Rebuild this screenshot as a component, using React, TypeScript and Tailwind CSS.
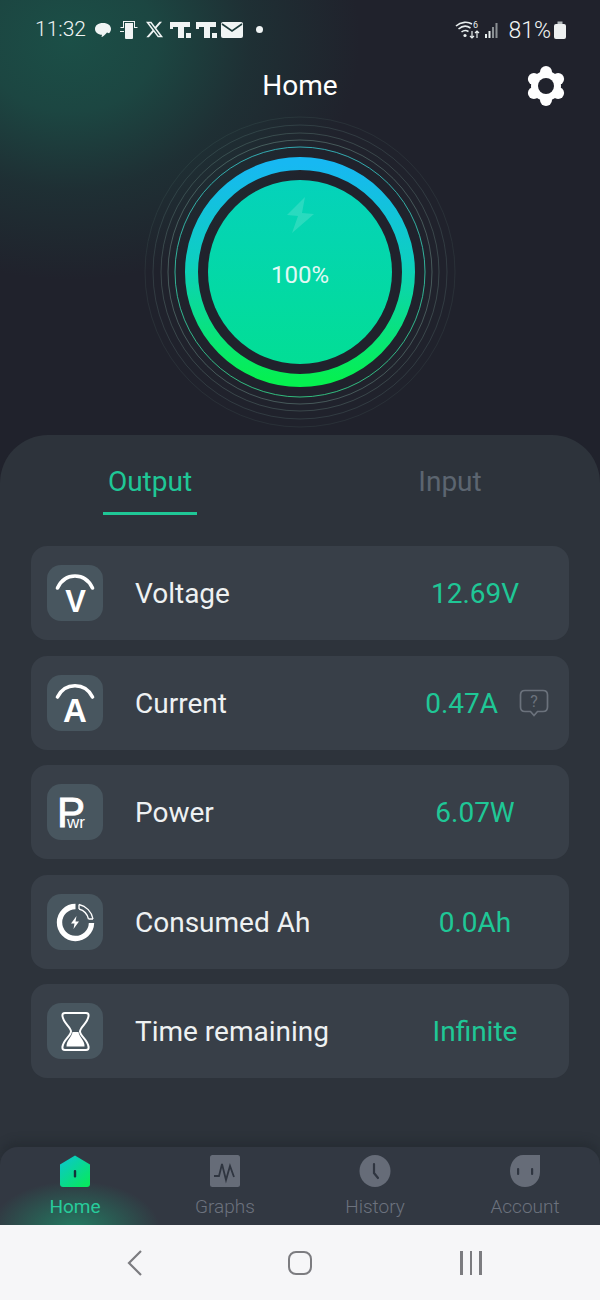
import { FaXTwitter } from "react-icons/fa6";
import type { ReactNode } from "react";

function Tile({ children }: { children: ReactNode }) {
  return (
    <div className="h-14 w-14 shrink-0 rounded-[14px] bg-[#48565f]">
      <svg viewBox="0 0 56 56" className="h-14 w-14">
        {children}
      </svg>
    </div>
  );
}

const iconFont = { fontFamily: "'Liberation Sans', sans-serif" };

const VoltageIcon = () => (
  <Tile>
    <path d="M10.5 23 C 18 7, 38 7, 45.5 23" fill="none" stroke="#fff" strokeWidth="3.6" strokeLinecap="round" />
    <text x="28.5" y="47" textAnchor="middle" fontSize="31" fontWeight="700" fill="#fff" style={iconFont}>V</text>
  </Tile>
);

const CurrentIcon = () => (
  <Tile>
    <path d="M10.5 22 C 18 7, 38 7, 45.5 22" fill="none" stroke="#fff" strokeWidth="3.6" strokeLinecap="round" />
    <text x="28" y="47" textAnchor="middle" fontSize="33" fontWeight="700" fill="#fff" style={iconFont}>A</text>
  </Tile>
);

const PowerIcon = () => (
  <Tile>
    <text x="10" y="43" fontSize="42" fill="#fff" stroke="#fff" strokeWidth="0.9" style={iconFont}>P</text>
    <text x="20" y="43.5" fontSize="17" fill="#fff" style={iconFont}>wr</text>
  </Tile>
);

const ConsumedIcon = () => (
  <Tile>
    <path d="M28.5 12.5 A 16 16 0 1 0 44.5 29" fill="none" stroke="#fff" strokeWidth="5.4" />
    <path d="M32 10.5 A 18 18 0 0 1 46 25" fill="none" stroke="#fff" strokeWidth="1.3" />
    <path d="M32 15 A 13.5 13.5 0 0 1 41.5 25" fill="none" stroke="#fff" strokeWidth="1.3" />
    <path d="M32 10.5 V15 M46 25 H41.5" stroke="#fff" strokeWidth="1.3" />
    <polygon points="29.5,22 24,29.5 27.5,29.5 26.5,35 32,27.5 28.5,27.5" fill="#fff" />
  </Tile>
);

const HourglassIcon = () => (
  <Tile>
    <path
      d="M18 10 H39 Q42 10 41.5 13 C 41 20, 33 24, 33 28.5 C 33 33, 41 37, 41.5 44 Q42 47 39 47 H18 Q15 47 15.5 44 C 16 37, 24 33, 24 28.5 C 24 24, 16 20, 15.5 13 Q15 10 18 10 Z"
      fill="none"
      stroke="#fff"
      strokeWidth="2"
    />
    <path d="M25.5 29 H31.5 C 32 34, 38 38, 37.5 43.5 H19.5 C 19 38, 25 34, 25.5 29 Z" fill="#fff" />
  </Tile>
);

const rows = [
  { label: "Voltage", value: "12.69V", icon: <VoltageIcon /> },
  { label: "Current", value: "0.47A", icon: <CurrentIcon />, help: true },
  { label: "Power", value: "6.07W", icon: <PowerIcon /> },
  { label: "Consumed Ah", value: "0.0Ah", icon: <ConsumedIcon /> },
  { label: "Time remaining", value: "Infinite", icon: <HourglassIcon /> },
];

function HelpBubble() {
  return (
    <svg viewBox="0 0 30 28" className="h-7 w-[30px] shrink-0">
      <path
        d="M6 1.5 H24 Q28.5 1.5 28.5 6 V18 Q28.5 22.5 24 22.5 H18.5 L15 26.5 L11.5 22.5 H6 Q1.5 22.5 1.5 18 V6 Q1.5 1.5 6 1.5 Z"
        fill="none"
        stroke="#6b727c"
        strokeWidth="1.7"
      />
      <text x="15" y="18" textAnchor="middle" fontSize="16" fill="#6b727c" style={{ fontFamily: "Roboto, sans-serif" }}>?</text>
    </svg>
  );
}

function Gauge() {
  return (
    <svg viewBox="0 0 340 320" className="mx-auto block h-[320px] w-[340px]">
      <defs>
        <linearGradient id="ring" x1="0" y1="0" x2="0" y2="1">
          <stop offset="0" stopColor="#17b8f2" />
          <stop offset="0.45" stopColor="#0dcfc0" />
          <stop offset="1" stopColor="#05f050" />
        </linearGradient>
        <linearGradient id="core" x1="0" y1="0" x2="0" y2="1">
          <stop offset="0" stopColor="#05d2bb" />
          <stop offset="1" stopColor="#02de95" />
        </linearGradient>
        <linearGradient id="thin" x1="0" y1="0" x2="0" y2="1">
          <stop offset="0" stopColor="#35c0c8" />
          <stop offset="1" stopColor="#34d58a" />
        </linearGradient>
      </defs>
      <circle cx="170" cy="160" r="155" fill="none" stroke="#9fd8c4" strokeOpacity="0.08" />
      <circle cx="170" cy="160" r="147" fill="none" stroke="#9fd8c4" strokeOpacity="0.14" />
      <circle cx="170" cy="160" r="139" fill="none" stroke="#9fd8c4" strokeOpacity="0.2" />
      <circle cx="170" cy="160" r="132" fill="none" stroke="#9fd8c4" strokeOpacity="0.3" />
      <circle cx="170" cy="160" r="125" fill="none" stroke="url(#thin)" strokeOpacity="0.85" />
      <circle cx="170" cy="160" r="108.5" fill="none" stroke="url(#ring)" strokeWidth="13" />
      <circle cx="170" cy="160" r="92" fill="url(#core)" />
      <polygon points="175,85 157,103 168,104 162,121 184,102 172,101" fill="#fff" fillOpacity="0.15" />
      <text x="170" y="171" textAnchor="middle" fontSize="24" fill="#e2f9f5" style={{ fontFamily: "Roboto, sans-serif" }}>100%</text>
    </svg>
  );
}

function StatusBar() {
  return (
    <div className="flex h-14 items-center justify-between pl-[35px] pr-[34px] pt-[3px] text-[21px] text-[#f0f4f4]">
      <div className="flex items-center">
        <span className="w-[59px] font-light">11:32</span>
        <svg viewBox="0 0 18 18" className="h-[18px] w-[18px]">
          <path d="M9 2 C14 2 17 4.6 17 8 C17 10.4 15.6 11.6 15 12.2 L13 11.5 C11 14 8.5 16 7.5 16 L8 13.8 C4 13.6 1 11.4 1 8 C1 4.6 4 2 9 2 Z" fill="#f0f4f4" />
        </svg>
        <svg viewBox="0 0 20 20" className="ml-[7px] h-5 w-5">
          <path d="M4 1 H16 V7 H18.5 V8 H15 V2 H5 V8 H1.5 V7 H4 Z M6 3 H14 V18 Q14 19 13 19 H7 Q6 19 6 18 Z M1 11 H5 V12 H1 Z" fill="#f0f4f4" />
        </svg>
        <FaXTwitter className="ml-[6px] h-[19px] w-[19px] text-[#f0f4f4]" />
        {[0, 1].map((i) => (
          <svg key={i} viewBox="0 0 22 18" className={i === 0 ? "ml-[6px] h-[18px] w-[22px]" : "ml-[4px] h-[18px] w-[22px]"}>
            <path d="M0 1 H20 V6 H14 V17 H8 V6 H3 V8 H0 Z" fill="#f0f4f4" />
            <rect x="16" y="12" width="5" height="5" fill="#f0f4f4" />
          </svg>
        ))}
        <svg viewBox="0 0 22 16" className="ml-[3px] h-4 w-[22px]">
          <rect y="0" width="22" height="16" rx="2" fill="#f0f4f4" />
          <path d="M1 2 L11 9 L21 2" fill="none" stroke="#1c3a3a" strokeWidth="1.6" />
        </svg>
        <span className="ml-[13px] h-[7px] w-[7px] rounded-full bg-[#f0f4f4]" />
      </div>
      <div className="flex items-center">
        <svg viewBox="0 0 26 20" className="h-5 w-[26px]">
          <path d="M1 6 C6 1.5 13 1.5 17 4 M3.5 9 C7.5 5.5 12 5.5 15.5 8 M6.5 12 C9 10 11 10 13.5 11.5" fill="none" stroke="#e8eeee" strokeWidth="1.6" />
          <circle cx="10" cy="15.5" r="1.6" fill="#e8eeee" />
          <text x="18" y="8" fontSize="9" fill="#e8eeee" style={{ fontFamily: "Roboto, sans-serif" }}>6</text>
          <path d="M17 11 V18 M15 16 L17 18 L19 16 M22 18 V11 M20 13 L22 11 L24 13" fill="none" stroke="#e8eeee" strokeWidth="1.2" />
        </svg>
        <svg viewBox="0 0 15 18" className="ml-1 h-[18px] w-[15px]">
          <rect x="0" y="13" width="2" height="4" fill="#e8eeee" />
          <rect x="3.5" y="10" width="2" height="7" fill="#e8eeee" />
          <rect x="7" y="6" width="2" height="11" fill="#8b9094" />
          <rect x="10.5" y="2" width="2" height="15" fill="#8b9094" />
        </svg>
        <span className="ml-2 pt-[3px] text-[23px] leading-7 font-light">81%</span>
        <svg viewBox="0 0 12 18" className="ml-[3px] h-[18px] w-3">
          <rect x="3.5" y="0.5" width="5" height="3" fill="#b4b9bc" />
          <rect x="0" y="3" width="12" height="15" rx="2" fill="#eef0f0" />
        </svg>
      </div>
    </div>
  );
}

function Gear() {
  const lobes = [
    [20, 6],
    [32.1, 13],
    [32.1, 27],
    [20, 34],
    [7.9, 27],
    [7.9, 13],
  ];
  return (
    <svg viewBox="0 0 40 40" className="h-10 w-10">
      {lobes.map(([cx, cy]) => (
        <circle key={`${cx}-${cy}`} cx={cx} cy={cy} r="6" fill="#fff" />
      ))}
      <circle cx="20" cy="20" r="15" fill="#fff" />
      <circle cx="20" cy="20" r="8" fill="#20222c" />
    </svg>
  );
}

function BottomNav() {
  const navIcon = "h-8 w-8";
  return (
    <nav className="grid h-[78px] grid-cols-4 overflow-hidden rounded-t-[18px] bg-[#323842] bg-[radial-gradient(ellipse_85px_48px_at_75px_82px,rgba(20,190,130,0.5),rgba(20,190,130,0)_100%)] shadow-[0_-6px_8px_rgba(30,33,40,0.35)]">
      <div className="flex flex-col items-center pt-[8px]">
        <svg viewBox="0 0 32 32" className={navIcon}>
          <defs>
            <linearGradient id="homeFill" x1="0" y1="0" x2="0.8" y2="1">
              <stop offset="0" stopColor="#0cc4d4" />
              <stop offset="1" stopColor="#07e860" />
            </linearGradient>
          </defs>
          <path d="M16 0.5 L31 9.5 V29 Q31 32 28 32 H4 Q1 32 1 29 V9.5 Z" fill="url(#homeFill)" />
          <rect x="14.8" y="15" width="2.4" height="7.5" rx="1" fill="#14323a" />
        </svg>
        <span className="mt-2 text-[19px] leading-6 text-[#27cc9b]">Home</span>
      </div>
      <div className="flex flex-col items-center pt-[8px]">
        <svg viewBox="0 0 32 32" className={navIcon}>
          <rect x="1" width="30" height="32" rx="2.5" fill="#666c78" />
          <path d="M5 21 H10 L13 9 L17 25 L21 11 L25 22" fill="none" stroke="#2f3540" strokeWidth="1.8" />
        </svg>
        <span className="mt-2 text-[19px] font-light leading-6 text-[#6c727e]">Graphs</span>
      </div>
      <div className="flex flex-col items-center pt-[8px]">
        <svg viewBox="0 0 32 32" className={navIcon}>
          <ellipse cx="16" cy="16" rx="15.5" ry="16" fill="#666c78" />
          <path d="M15 9 V18 L19 23" fill="none" stroke="#2f3540" strokeWidth="2.2" strokeLinecap="round" />
        </svg>
        <span className="mt-2 text-[19px] font-light leading-6 text-[#6c727e]">History</span>
      </div>
      <div className="flex flex-col items-center pt-[8px]">
        <svg viewBox="0 0 32 32" className={navIcon}>
          <path d="M14 0 H31 V17 C31 26 24 32 16 32 C7 32 1 25 1 16 C1 7 7 0 14 0 Z" fill="#666c78" />
          <rect x="8" y="13" width="2.2" height="7" rx="1" fill="#2f3540" />
          <rect x="22" y="13" width="2.2" height="7" rx="1" fill="#2f3540" />
        </svg>
        <span className="mt-2 text-[19px] font-light leading-6 text-[#6c727e]">Account</span>
      </div>
    </nav>
  );
}

export default function App() {
  return (
    <div className="flex h-[1300px] w-[600px] flex-col overflow-hidden bg-[#20222c] bg-[radial-gradient(ellipse_290px_240px_at_70px_40px,#1b4f47_0%,rgba(27,79,71,0.8)_30%,rgba(27,79,71,0.3)_62%,rgba(27,79,71,0)_100%)] font-['Roboto',sans-serif]">
      <StatusBar />
      <header className="grid h-14 grid-cols-[1fr_auto_1fr] items-center pr-[34px] pt-1">
        <span />
        <h1 className="pl-[34px] text-[28px] font-normal text-white">Home</h1>
        <div className="justify-self-end">
          <Gear />
        </div>
      </header>
      <Gauge />

      <main className="mt-[3px] flex flex-1 flex-col rounded-t-[48px] bg-[#2d333b]">
        <div className="grid grid-cols-2 pt-[27px]">
          <div className="flex flex-col items-center">
            <span className="text-[28px] leading-10 text-[#1fc796]">Output</span>
            <span className="mt-[10px] h-[3px] w-[94px] bg-[#1fc796]" />
          </div>
          <div className="flex flex-col items-center">
            <span className="text-[28px] leading-10 text-[#5c6570]">Input</span>
          </div>
        </div>

        <div className="mt-[31px] flex flex-col gap-[15.5px] px-[31px]">
          {rows.map((row) => (
            <div key={row.label} className="flex h-[94px] items-center rounded-2xl bg-[#383f48] px-4">
              {row.icon}
              <span className="ml-8 flex-1 pt-[2px] text-[28px] text-[#eef1f2]">{row.label}</span>
              {row.help ? (
                <div className="flex w-[156px] items-center justify-end gap-[21px] pr-[4px]">
                  <span className="pt-[2px] text-[28px] text-[#1fc796]">{row.value}</span>
                  <HelpBubble />
                </div>
              ) : (
                <span className="w-[156px] pt-[2px] text-center text-[28px] text-[#1fc796]">{row.value}</span>
              )}
            </div>
          ))}
        </div>

        <div className="mt-auto">
          <BottomNav />
        </div>
      </main>

      <footer className="flex h-[75px] items-center bg-[#f6f6f8]">
        <div className="grid w-full grid-cols-3 items-center">
          <div className="flex justify-end pr-[57px]">
            <svg viewBox="0 0 16 28" className="h-7 w-4">
              <path d="M14 2 L2 14 L14 26" fill="none" stroke="#7c7c80" strokeWidth="2.2" />
            </svg>
          </div>
          <div className="flex justify-center">
            <span className="h-6 w-6 rounded-[8px] border-2 border-[#7c7c80]" />
          </div>
          <div className="flex justify-start gap-[7px] pl-[60px]">
            <span className="h-6 w-[2.5px] bg-[#7c7c80]" />
            <span className="h-6 w-[2.5px] bg-[#7c7c80]" />
            <span className="h-6 w-[2.5px] bg-[#7c7c80]" />
          </div>
        </div>
      </footer>
    </div>
  );
}
